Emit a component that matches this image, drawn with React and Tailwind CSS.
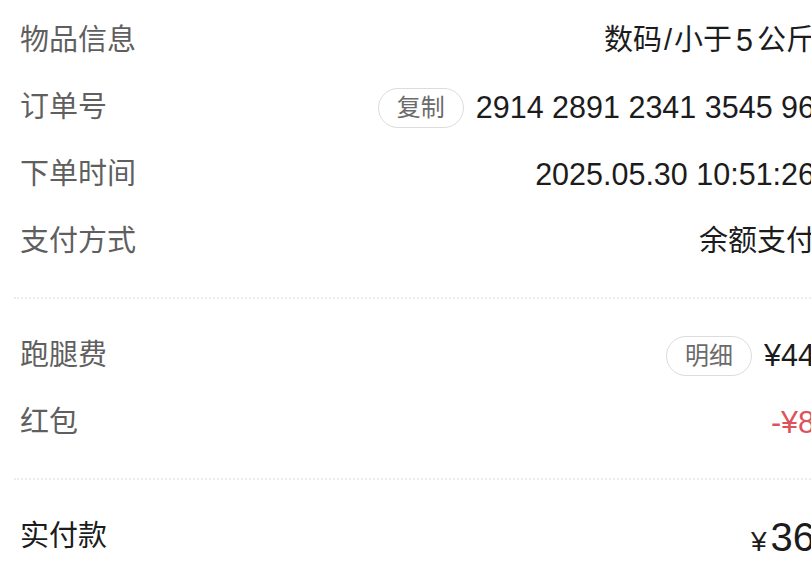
import React from "react";

const Pill = ({ children }) => (
  <span className="inline-flex h-[40px] items-center rounded-full border border-[#dcdcdc] px-[18px] text-[24px] leading-none text-[#6b6b6b]">
    {children}
  </span>
);

const Row = ({ label, children, labelClass = "text-[#5f5f5f]" }) => (
  <div className="flex h-[67px] items-center justify-between whitespace-nowrap">
    <span className={`text-[29px] ${labelClass}`}>{label}</span>
    <div className="flex items-center gap-3 text-[29px] text-[#1c1c1c]">{children}</div>
  </div>
);

const Num = ({ children, className = "" }) => (
  <span className={`text-[30.5px] ${className}`}>{children}</span>
);

const Divider = () => <div className="ml-[-6px] border-t-2 border-dotted border-[#ececec]" />;

export default function App() {
  return (
    <div
      className="h-[581px] w-[811px] overflow-hidden bg-white"
      style={{ fontFamily: '"Liberation Sans", "Noto Sans CJK SC", sans-serif' }}
    >
      <div className="w-[815px] pl-5 pt-[7px]">
        {/* order info */}
        <Row label="物品信息">
          <span className="flex items-center">
            数码<span className="mx-[2px]">/</span>小于<Num className="mx-[4px]">5</Num>公斤
          </span>
        </Row>
        <Row label="订单号">
          <Pill>复制</Pill>
          <Num>2914 2891 2341 3545 96</Num>
        </Row>
        <Row label="下单时间">
          <Num>2025.05.30 10:51:26</Num>
        </Row>
        <Row label="支付方式">
          <span>余额支付</span>
        </Row>

        <div className="mt-[22px]">
          <Divider />
        </div>

        {/* fees */}
        <div className="mt-[23px]">
          <Row label="跑腿费">
            <Pill>明细</Pill>
            <Num>¥44</Num>
          </Row>
          <Row label="红包">
            <Num className="text-[#e0525b]">-¥8</Num>
          </Row>
        </div>

        <div className="mt-[22px]">
          <Divider />
        </div>

        {/* total */}
        <div className="mt-[23px]">
          <Row label="实付款" labelClass="text-[#1c1c1c]">
            <span className="flex items-baseline">
              <span className="mr-[4px] text-[28px]">¥</span>
              <span className="text-[40px]">36</span>
            </span>
          </Row>
        </div>
      </div>
    </div>
  );
}
